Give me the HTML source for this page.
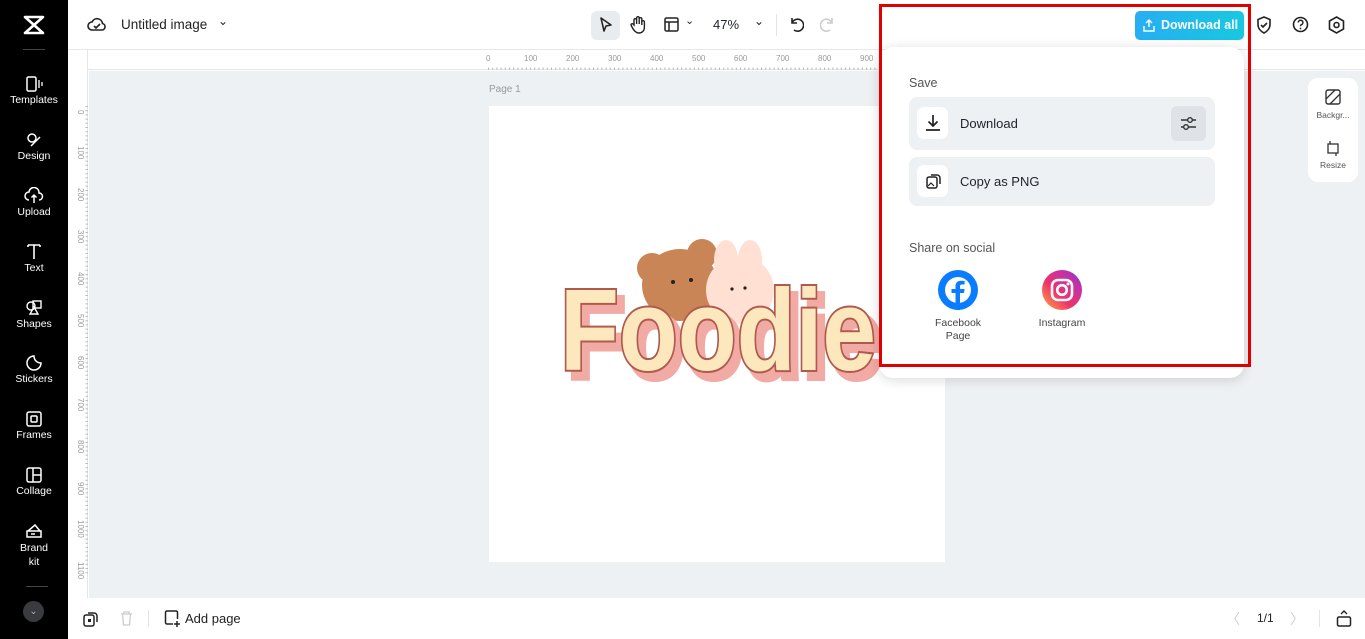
<!DOCTYPE html>
<html><head><meta charset="utf-8"><style>
*{margin:0;padding:0;box-sizing:border-box}
body{width:1365px;height:639px;overflow:hidden;font-family:"Liberation Sans",sans-serif;background:#fff;position:relative;color:#1f2329}
.abs{position:absolute}
.side{left:0;top:0;width:68px;height:639px;background:#000}
.si{position:absolute;left:0;width:68px;text-align:center;color:#fff;font-size:10.5px}
.si svg{display:block;margin:0 auto 2px}
.top{left:68px;top:0;width:1297px;height:50px;background:#fff;border-bottom:1px solid #e6e8eb}
.rulh{left:88px;top:50px;width:1277px;height:20px;background:#fff;border-bottom:1px solid #e3e6ea}
.rulv{left:68px;top:50px;width:20px;height:548px;background:#fff;border-right:1px solid #e3e6ea}
.canvas{left:89px;top:71px;width:1276px;height:527px;background:#eef1f4}
.bot{left:68px;top:598px;width:1297px;height:41px;background:#fff}
.pop{left:879px;top:47px;width:365px;height:331px;background:#fff;border-radius:14px;box-shadow:0 2px 12px rgba(0,0,0,.15)}
.row{position:absolute;left:30px;width:306px;background:#eef1f4;border-radius:8px}
.ib{position:absolute;left:8px;width:31px;height:32px;background:#fff;border-radius:7px}
.lbl{position:absolute;left:51px;font-size:13px;color:#1f2329}
.gray{color:#555;font-size:12.5px}
</style></head><body>
<div class="abs side">
 <div class="si" style="top:15px"><svg width="24" height="20" viewBox="0 0 24 20"><path d="M3 2h18L12 10zM3 18h18L12 10z" stroke="#fff" stroke-width="2.6" fill="none" stroke-linejoin="round"/></svg></div>
 <div class="abs" style="left:23px;top:49px;width:22px;height:1px;background:#444"></div>
 <div class="si" style="top:76px"><svg width="18" height="16"><rect x="2" y="1" width="9" height="14" rx="1.5" fill="none" stroke="#fff" stroke-width="1.5"/><path d="M14 4v8M17 6v4" stroke="#fff" stroke-width="1.3"/></svg>Templates</div>
 <div class="si" style="top:131px"><svg width="18" height="17"><circle cx="7" cy="7" r="4" fill="none" stroke="#fff" stroke-width="1.5"/><path d="M6 15l9-9" stroke="#fff" stroke-width="1.5"/></svg>Design</div>
 <div class="si" style="top:187px"><svg width="20" height="17"><path d="M5 13a4 4 0 0 1 0-8 5 5 0 0 1 10 1 3.5 3.5 0 0 1 0 7M10 8v8M7.5 10.5L10 8l2.5 2.5" fill="none" stroke="#fff" stroke-width="1.5"/></svg>Upload</div>
 <div class="si" style="top:243px"><svg width="18" height="17"><path d="M3 2h12M9 2v14M3 2v2M15 2v2" stroke="#fff" stroke-width="1.6" fill="none"/></svg>Text</div>
 <div class="si" style="top:299px"><svg width="18" height="17"><circle cx="6" cy="7" r="4" fill="none" stroke="#fff" stroke-width="1.4"/><rect x="8" y="2" width="8" height="7" fill="none" stroke="#fff" stroke-width="1.4"/><path d="M9 8l4 7H5z" fill="none" stroke="#fff" stroke-width="1.4"/></svg>Shapes</div>
 <div class="si" style="top:354px"><svg width="18" height="17"><path d="M9 2a7 7 0 1 0 7 7c-4 0-7-3-7-7z" fill="none" stroke="#fff" stroke-width="1.5"/></svg>Stickers</div>
 <div class="si" style="top:410px"><svg width="18" height="17"><rect x="2" y="2" width="14" height="14" rx="2" fill="none" stroke="#fff" stroke-width="1.5"/><rect x="6" y="6" width="6" height="6" rx="1" fill="none" stroke="#fff" stroke-width="1.5"/></svg>Frames</div>
 <div class="si" style="top:466px"><svg width="18" height="17"><rect x="2" y="2" width="14" height="14" rx="2" fill="none" stroke="#fff" stroke-width="1.5"/><path d="M8 2v14M8 9h8" stroke="#fff" stroke-width="1.5"/></svg>Collage</div>
 <div class="si" style="top:522px;line-height:14px"><svg width="18" height="17"><path d="M2 9h14v6H2zM3 9l7-6 5 6" fill="none" stroke="#fff" stroke-width="1.5"/><path d="M6 12h4" stroke="#fff" stroke-width="1.5"/></svg>Brand<br>kit</div>
 <div class="abs" style="left:26px;top:586px;width:22px;height:1px;background:#444"></div>
 <div class="abs" style="left:23px;top:601px;width:21px;height:21px;border-radius:50%;background:#3a3b3e;color:#aaa;font-size:10px;text-align:center;line-height:21px">⌄</div>
</div>
<div class="abs" style="left:68px;top:297px;width:7px;height:46px;background:#2b2b2b;border-radius:0 8px 8px 0"></div>
<div class="abs top">
 <svg class="abs" style="left:19px;top:16px" width="20" height="17"><path d="M5 14a4 4 0 0 1 0-8 5.5 5.5 0 0 1 10.5 1.5 3.3 3.3 0 0 1-.5 6.5z" fill="none" stroke="#222" stroke-width="1.6"/><path d="M7 10l2 2 4-4" stroke="#222" stroke-width="1.6" fill="none"/></svg>
 <div class="abs" style="left:53px;top:17px;font-size:13.5px;color:#222">Untitled image</div>
 <div class="abs" style="left:150px;top:14px;font-size:12px">⌄</div>
 <div class="abs" style="left:523px;top:11px;width:29px;height:29px;background:#e9ecef;border-radius:6px"></div>
 <svg class="abs" style="left:530px;top:16px" width="16" height="18"><path d="M3 2l10 7-5 1-2 5z" fill="none" stroke="#222" stroke-width="1.6" stroke-linejoin="round"/></svg>
 <svg class="abs" style="left:561px;top:15px" width="18" height="19"><path d="M5 10V5a1.3 1.3 0 0 1 2.6 0V9V3a1.3 1.3 0 0 1 2.6 0v6V4a1.3 1.3 0 0 1 2.6 0v6V7a1.3 1.3 0 0 1 2.6 0v5c0 4-2.5 6-5.5 6S5 16 3 12l-1-2a1.2 1.2 0 0 1 2-1z" fill="none" stroke="#222" stroke-width="1.4"/></svg>
 <svg class="abs" style="left:596px;top:17px" width="15" height="15"><rect x="1" y="1" width="13" height="13" rx="1.5" fill="none" stroke="#222" stroke-width="1.5"/><path d="M1 5h13M5 5v9" stroke="#222" stroke-width="1.5"/></svg>
 <div class="abs" style="left:617px;top:14px;font-size:11px">⌄</div>
 <div class="abs" style="left:645px;top:17px;font-size:13px">47%</div>
 <div class="abs" style="left:686px;top:14px;font-size:12px">⌄</div>
 <div class="abs" style="left:708px;top:14px;width:1px;height:22px;background:#e3e3e3"></div>
 <svg class="abs" style="left:720px;top:16px" width="16" height="17"><path d="M4 2v5h5M4 7a6 6 0 1 1 2 7" fill="none" stroke="#222" stroke-width="1.6"/></svg>
 <svg class="abs" style="left:752px;top:16px" width="16" height="17"><path d="M12 2v5H7M12 7a6 6 0 1 0-2 7" fill="none" stroke="#ccc" stroke-width="1.6"/></svg>
 <div class="abs" style="left:1067px;top:11px;width:109px;height:29px;border-radius:5px;background:linear-gradient(90deg,#27aef2,#18c8e0);color:#fff;font-size:12.5px;font-weight:bold;line-height:29px;padding-left:26px">Download all</div>
 <svg class="abs" style="left:1075px;top:18px" width="12" height="14"><path d="M6 9V2M3 5l3-3 3 3M1 8v5h10V8" fill="none" stroke="#fff" stroke-width="1.4"/></svg>
 <svg class="abs" style="left:1188px;top:16px" width="16" height="18"><path d="M8 1l6 2.5v5c0 4-3 7-6 8.5-3-1.5-6-4.5-6-8.5v-5z M5 9l2 2 4-4" fill="none" stroke="#222" stroke-width="1.6"/></svg>
 <svg class="abs" style="left:1224px;top:16px" width="17" height="17"><circle cx="8.5" cy="8.5" r="7" fill="none" stroke="#222" stroke-width="1.6"/><path d="M6.3 6.5a2.3 2.3 0 1 1 3 2.2c-.7.3-.8.8-.8 1.5" fill="none" stroke="#222" stroke-width="1.5"/><circle cx="8.5" cy="12.5" r=".9" fill="#222"/></svg>
 <svg class="abs" style="left:1260px;top:16px" width="17" height="18"><path d="M8.5 1l7 4v8l-7 4-7-4V5z" fill="none" stroke="#222" stroke-width="1.6"/><circle cx="8.5" cy="9" r="2.5" fill="none" stroke="#222" stroke-width="1.6"/></svg>
</div>
<div class="abs rulh">
 <svg width="1277" height="20" style="position:absolute;left:0;top:0"><g font-size="8" fill="#999" font-family="Liberation Sans">
 <text x="398" y="11">0</text><text x="436" y="11">100</text><text x="478" y="11">200</text><text x="520" y="11">300</text><text x="562" y="11">400</text><text x="604" y="11">500</text><text x="646" y="11">600</text><text x="688" y="11">700</text><text x="730" y="11">800</text><text x="772" y="11">900</text></g>
 <path d="M400 19h390" stroke="#bbb" stroke-dasharray="1 3.2" stroke-width="3"/></svg>
</div>
<div class="abs rulv"><svg width="20" height="548"><g font-size="8" fill="#999" font-family="Liberation Sans">
<text transform="translate(10 60) rotate(90)">0</text><text transform="translate(10 96) rotate(90)">100</text><text transform="translate(10 138) rotate(90)">200</text><text transform="translate(10 180) rotate(90)">300</text><text transform="translate(10 222) rotate(90)">400</text><text transform="translate(10 264) rotate(90)">500</text><text transform="translate(10 306) rotate(90)">600</text><text transform="translate(10 348) rotate(90)">700</text><text transform="translate(10 390) rotate(90)">800</text><text transform="translate(10 432) rotate(90)">900</text><text transform="translate(10 470) rotate(90)">1000</text><text transform="translate(10 512) rotate(90)">1100</text></g>
<path d="M19 56v470" stroke="#bbb" stroke-dasharray="1 3.2" stroke-width="3"/></svg></div>
<div class="abs canvas"></div>
<div class="abs" style="left:489px;top:84px;font-size:10px;color:#999">Page 1</div>
<div class="abs" style="left:489px;top:106px;width:456px;height:456px;background:#fff"></div>
<svg class="abs" style="left:540px;top:230px" width="345" height="160">
 <circle cx="112" cy="38" r="15" fill="#c98555"/><circle cx="162" cy="24" r="15" fill="#c98555"/>
 <ellipse cx="140" cy="55" rx="38" ry="36" fill="#c98555"/>
 <ellipse cx="186" cy="30" rx="12" ry="20" fill="#ffe0d2"/><ellipse cx="210" cy="30" rx="12" ry="20" fill="#ffe0d2"/>
 <ellipse cx="200" cy="60" rx="34" ry="34" fill="#ffe0d2"/>
 <circle cx="133" cy="52" r="2" fill="#222"/><circle cx="151" cy="50" r="2" fill="#222"/>
 <circle cx="192" cy="59" r="1.6" fill="#222"/><circle cx="205" cy="58" r="1.6" fill="#222"/>
 <text x="27" y="148" textLength="316" lengthAdjust="spacingAndGlyphs" font-family="Liberation Sans" font-weight="bold" font-size="116" fill="#f2aaa4" stroke="#f2aaa4" stroke-width="6">Foodie</text>
 <text x="20" y="140" textLength="316" lengthAdjust="spacingAndGlyphs" font-family="Liberation Sans" font-weight="bold" font-size="116" fill="#fde8bd" stroke="#b05a4f" stroke-width="4" paint-order="stroke">Foodie</text>
</svg>
<div class="abs" style="left:1308px;top:78px;width:50px;height:104px;background:#fff;border-radius:10px"></div>
<svg class="abs" style="left:1325px;top:89px" width="16" height="16"><rect x="1" y="1" width="14" height="14" rx="2" fill="none" stroke="#333" stroke-width="1.4"/><path d="M1 10L10 1M5 15L15 5" stroke="#333" stroke-width="1.3"/></svg>
<div class="abs" style="left:1308px;top:110px;width:50px;text-align:center;font-size:8.5px;color:#555">Backgr...</div>
<svg class="abs" style="left:1326px;top:141px" width="14" height="15"><rect x="2" y="3" width="10" height="9" fill="none" stroke="#333" stroke-width="1.3"/><path d="M4 0v3M10 12v3" stroke="#333" stroke-width="1.3"/></svg>
<div class="abs" style="left:1308px;top:160px;width:50px;text-align:center;font-size:8.5px;color:#555">Resize</div>
<div class="abs pop">
 <div class="abs gray" style="left:30px;top:29px">Save</div>
 <div class="row" style="top:50px;height:53px">
  <div class="ib" style="top:10px"></div>
  <svg class="abs" style="left:16px;top:17px" width="16" height="18"><path d="M8 1v11M3.5 7.5L8 12l4.5-4.5M1 16h14" fill="none" stroke="#222" stroke-width="1.7"/></svg>
  <div class="lbl" style="top:19px">Download</div>
  <div class="abs" style="left:262px;top:9px;width:35px;height:35px;background:#dfe3e8;border-radius:6px"></div>
  <svg class="abs" style="left:271px;top:18px" width="17" height="17"><path d="M1 5h15M1 12h15" stroke="#333" stroke-width="1.4"/><circle cx="10" cy="5" r="2.3" fill="#dfe3e8" stroke="#333" stroke-width="1.4"/><circle cx="6" cy="12" r="2.3" fill="#dfe3e8" stroke="#333" stroke-width="1.4"/></svg>
 </div>
 <div class="row" style="top:110px;height:49px">
  <div class="ib" style="top:8px"></div>
  <svg class="abs" style="left:17px;top:16px" width="15" height="16"><rect x="1" y="4" width="10" height="11" rx="2" fill="none" stroke="#222" stroke-width="1.5"/><path d="M5 2h6a3 3 0 0 1 3 3v6" fill="none" stroke="#222" stroke-width="1.5"/><path d="M2 13l3-3 3 3" fill="none" stroke="#222" stroke-width="1.2"/></svg>
  <div class="lbl" style="top:17px">Copy as PNG</div>
 </div>
 <div class="abs gray" style="left:30px;top:194px">Share on social</div>
 <svg class="abs" style="left:59px;top:223px" width="40" height="40"><circle cx="20" cy="20" r="20" fill="#0a7cff"/><circle cx="20" cy="20" r="13" fill="#fff"/><path d="M22 40V23h4l.6-4H22v-2.5c0-1.2.4-2 2-2h2.6v-3.6c-.5 0-2-.2-3.6-.2-3.5 0-5.5 2-5.5 5.6V19h-4v4h4v17z" fill="#0a7cff"/></svg>
 <div class="abs" style="left:40px;top:270px;width:78px;text-align:center;font-size:10.5px;color:#444;line-height:13px">Facebook<br>Page</div>
 <svg class="abs" style="left:163px;top:223px" width="40" height="40"><defs><linearGradient id="ig" x1="0" y1="1" x2="1" y2="0"><stop offset="0" stop-color="#fdb040"/><stop offset=".4" stop-color="#f0326a"/><stop offset=".75" stop-color="#c231a8"/><stop offset="1" stop-color="#6a3bd8"/></linearGradient></defs><circle cx="20" cy="20" r="20" fill="url(#ig)"/><rect x="10" y="10" width="20" height="20" rx="6" fill="none" stroke="#fff" stroke-width="2.6"/><circle cx="20" cy="20" r="4.8" fill="none" stroke="#fff" stroke-width="2.6"/><circle cx="26" cy="14" r="1.5" fill="#fff"/></svg>
 <div class="abs" style="left:144px;top:270px;width:78px;text-align:center;font-size:10.5px;color:#444">Instagram</div>
</div>
<div class="abs" style="left:879px;top:4px;width:372px;height:363px;border:3px solid #e00000"></div>
<div class="abs bot">
 <svg class="abs" style="left:15px;top:13px" width="15" height="16"><rect x="1" y="4" width="10" height="11" rx="2" fill="none" stroke="#222" stroke-width="1.5"/><path d="M5 2h6a3 3 0 0 1 3 3v6" fill="none" stroke="#222" stroke-width="1.5"/><rect x="5" y="8" width="3" height="3" fill="#222"/></svg>
 <svg class="abs" style="left:52px;top:13px" width="13" height="15"><path d="M1 3h11M4 3V1h5v2M2.5 3l1 11h6l1-11" fill="none" stroke="#ccc" stroke-width="1.3"/></svg>
 <div class="abs" style="left:80px;top:12px;width:1px;height:17px;background:#e3e3e3"></div>
 <svg class="abs" style="left:96px;top:12px" width="17" height="17"><path d="M9 14H3a1.5 1.5 0 0 1-1.5-1.5v-10A1.5 1.5 0 0 1 3 1h9a1.5 1.5 0 0 1 1.5 1.5V9M13 11v6M10 14h6" fill="none" stroke="#222" stroke-width="1.5"/></svg>
 <div class="abs" style="left:117px;top:13px;font-size:13px;color:#222">Add page</div>
 <div class="abs" style="left:1158px;top:11px;font-size:14px;color:#ccc">〈</div>
 <div class="abs" style="left:1189px;top:13px;font-size:12px;color:#222">1/1</div>
 <div class="abs" style="left:1222px;top:11px;font-size:14px;color:#ccc">〉</div>
 <div class="abs" style="left:1251px;top:12px;width:1px;height:17px;background:#e3e3e3"></div>
 <svg class="abs" style="left:1268px;top:12px" width="16" height="17"><rect x="1.5" y="7" width="13" height="9" rx="1.5" fill="none" stroke="#222" stroke-width="1.5"/><path d="M5 4l3-3 3 3" fill="none" stroke="#222" stroke-width="1.4"/></svg>
</div>
</body></html>
